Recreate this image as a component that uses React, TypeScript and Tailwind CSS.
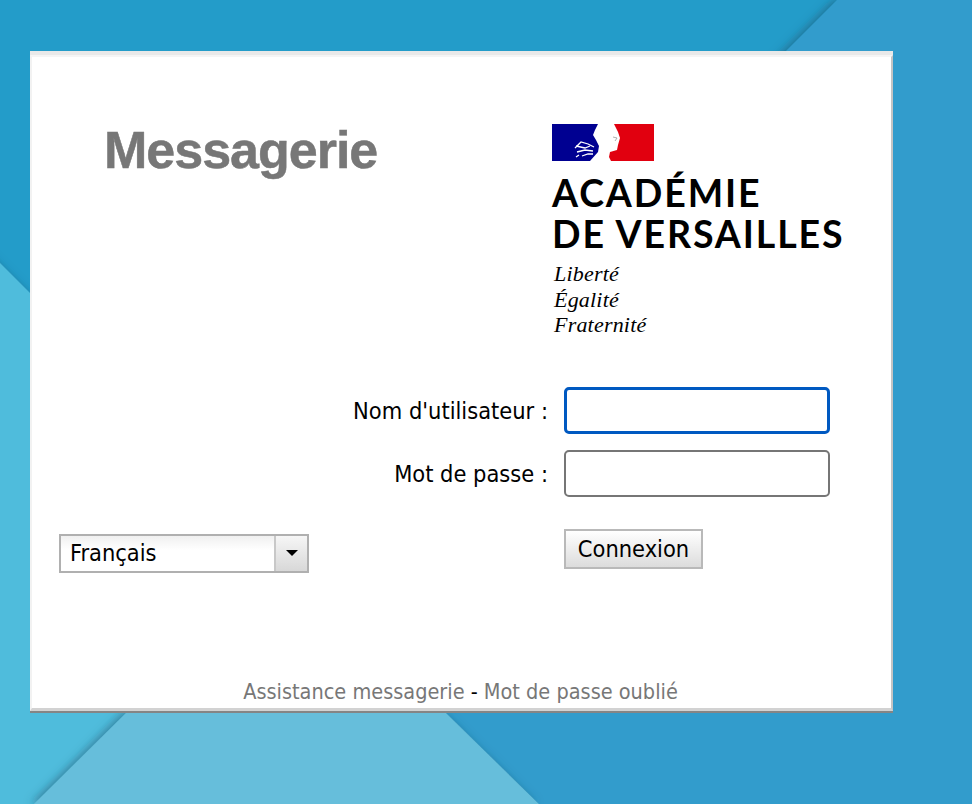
import React from 'react';

const labelFont = "font-['DejaVu_Sans_Condensed','DejaVu_Sans',sans-serif]";

const Background = () => (
  <svg className="absolute inset-0" width="972" height="804" viewBox="0 0 972 804">
    <defs>
      <filter id="edge" x="-20%" y="-20%" width="140%" height="140%">
        <feDropShadow dx="-3" dy="0" stdDeviation="4" floodColor="#1a4f6b" floodOpacity="0.55" />
      </filter>
    </defs>
    <rect width="972" height="804" fill="#239cc9" />
    <polygon points="-40,223 300,563 300,844 -40,844" fill="#4fbcdc" filter="url(#edge)" />
    <polygon points="837,0 1012,0 1012,844 580,844 446,713 700,137" fill="#309ccc" filter="url(#edge)" />
    <polygon points="127,712 446,713 539,804 34,804" fill="#66bedb" filter="url(#edge)" />
  </svg>
);

const Marianne = () => (
  <svg width="102" height="37" viewBox="0 0 102 37" className="block">
    <rect width="102" height="37" fill="#000091" />
    <rect x="56" width="46" height="37" fill="#e1000f" />
    <path d="M46 0 L62 0 L66 8 L68 14 L66 21 L65 26 L58 28 L57 33 L59 37 L38 37 L46 28 L47 22 L44 16 L41 11 L43 6 Z" fill="#ffffff" />
    <path d="M23 24 L29 18 L36 20 L42 23 M24 22 L33 24 L38 22 M25 28 L33 26 L41 27 M30 32 L36 30 L41 30 M24 33 L27 31" stroke="#ffffff" strokeWidth="1.3" fill="none" />
    <path d="M61 13 L65 14 L63 17" stroke="#9a9a9a" strokeWidth="0.8" fill="none" />
  </svg>
);

const Logo = () => (
  <div className="w-[292px] mt-[67px]">
    <Marianne />
    <div className="mt-[11px] font-['Lato',sans-serif] font-bold text-black text-[37.5px] leading-[41px] tracking-[1.9px] whitespace-nowrap">
      <div>ACADÉMIE</div>
      <div>DE VERSAILLES</div>
    </div>
    <div className="mt-[7px] ml-[2px] font-['Liberation_Serif',serif] italic text-black text-[22px] leading-[25.5px] tracking-[0.2px]">
      <div>Liberté</div>
      <div>Égalité</div>
      <div>Fraternité</div>
    </div>
  </div>
);

export default function App() {
  return (
    <div className="relative h-[804px] w-[972px] overflow-hidden">
      <Background />
      <div className="relative pt-[51px] pl-[30px]">
        <div className="w-[863px] h-[662px] border-t-4 border-b-2 border-t-[#e9e9e9] border-b-[#858585]">
          <div className="h-full bg-white border-x-2 border-t-2 border-b-[3px] border-l-[#f2f2f2] border-r-[#c4c4c4] border-t-[#f5f5f5] border-b-[#d2d2d2] flex flex-col">
            <div className="flex">
              <div className="w-[520px]">
                <h1 className="mt-[62px] ml-[72px] font-['Liberation_Sans',sans-serif] font-bold text-[#777777] text-[52px] leading-[62px] tracking-[-1px] [-webkit-text-stroke:0.5px_#777777]">
                  Messagerie
                </h1>
              </div>
              <Logo />
            </div>

            <div className={`mt-[49px] flex ${labelFont} text-black text-[23.4px]`}>
              <div className="w-[266px] pt-[147px] pl-[27px]">
                <div className="w-[250px] h-[39px] flex border-2 border-[#b0b0b0]">
                  <div className="flex-1 flex items-center pl-[9px] pt-[2px] bg-gradient-to-b from-[#f0f0f0] to-white to-40%">Français</div>
                  <div className="w-[33px] flex items-center justify-center border-l-2 border-[#c8c8c8] bg-gradient-to-b from-[#f6f6f6] to-[#d8d8d8]">
                    <span className="w-0 h-0 border-x-[6px] border-x-transparent border-t-[6px] border-t-black" />
                  </div>
                </div>
              </div>
              <div className="flex flex-col">
                <div className="flex items-center h-[47px]">
                  <label className="w-[250px] pt-[3px] text-right">Nom d'utilisateur :</label>
                  <input className="ml-[16px] w-[266px] h-[47px] rounded-[5px] border-[3px] border-[#0059c1] bg-white outline-none" />
                </div>
                <div className="flex items-center h-[47px] mt-[16px]">
                  <label className="w-[250px] pt-[3px] text-right">Mot de passe :</label>
                  <input className="ml-[16px] w-[266px] h-[47px] rounded-[5px] border-2 border-[#767676] bg-white outline-none" />
                </div>
                <button className="ml-[266px] mt-[32px] w-[139px] h-[40px] pt-[1px] border-2 border-[#b9b9b9] bg-gradient-to-b from-white to-[#dcdcdc] text-black">
                  Connexion
                </button>
              </div>
            </div>

            <div className={`mt-auto mb-[2px] pr-[2px] text-center ${labelFont} text-[21.5px] leading-[28px] text-[#777777]`}>
              Assistance messagerie <span className="text-black">-</span> Mot de passe oublié
            </div>
          </div>
        </div>
      </div>
    </div>
  );
}
